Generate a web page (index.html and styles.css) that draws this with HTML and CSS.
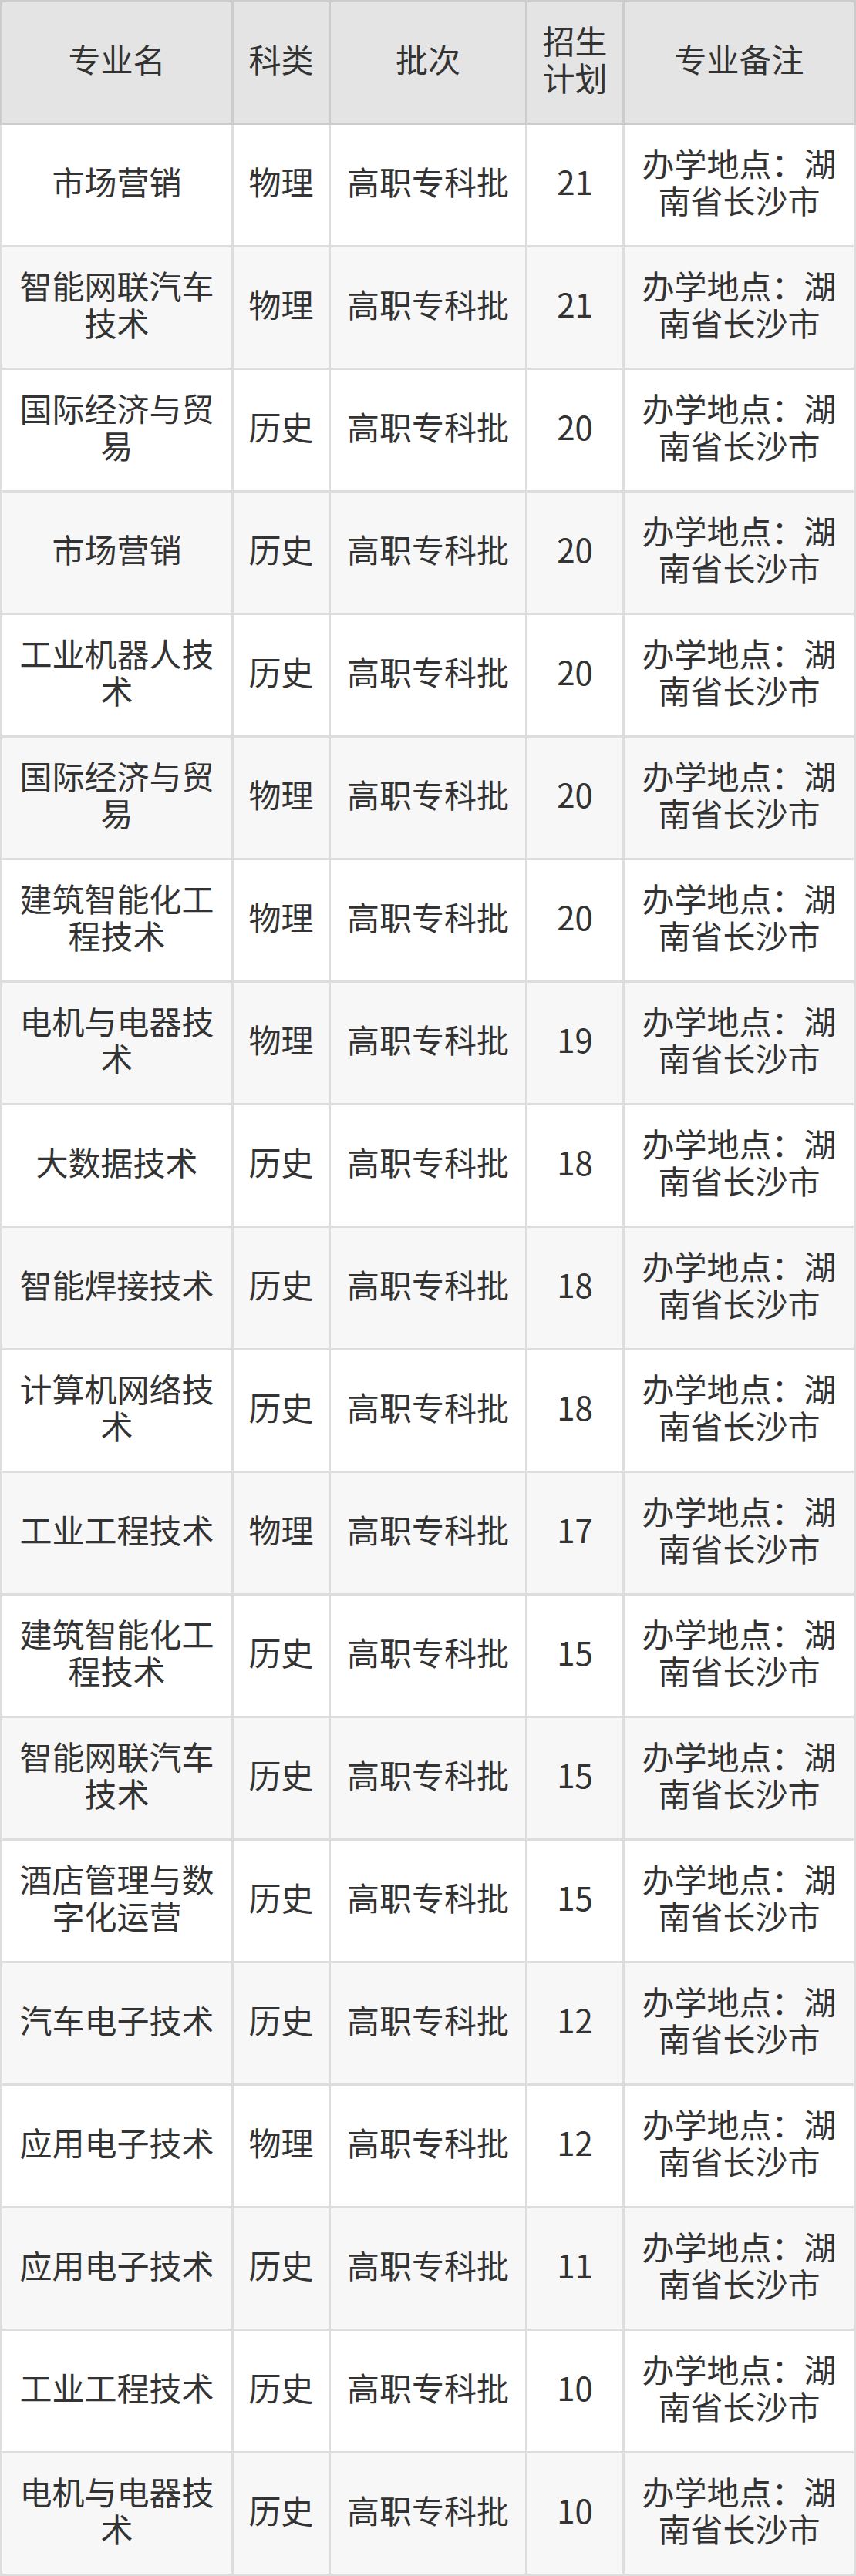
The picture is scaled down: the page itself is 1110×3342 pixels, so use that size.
FILE: index.html
```html
<!DOCTYPE html>
<html lang="zh-CN">
<head>
<meta charset="utf-8">
<title>专业招生计划</title>
<link rel="stylesheet" href="styles.css">
</head>
<body>
<table class="plan">
<thead>
<tr><th class="c1">专业名</th><th class="c2">科类</th><th class="c3">批次</th><th class="c4">招生计划</th><th class="c5">专业备注</th></tr>
</thead>
<tbody>
<tr><td>市场营销</td><td>物理</td><td>高职专科批</td><td>21</td><td>办学地点：湖南省长沙市</td></tr>
<tr><td>智能网联汽车技术</td><td>物理</td><td>高职专科批</td><td>21</td><td>办学地点：湖南省长沙市</td></tr>
<tr><td>国际经济与贸易</td><td>历史</td><td>高职专科批</td><td>20</td><td>办学地点：湖南省长沙市</td></tr>
<tr><td>市场营销</td><td>历史</td><td>高职专科批</td><td>20</td><td>办学地点：湖南省长沙市</td></tr>
<tr><td>工业机器人技术</td><td>历史</td><td>高职专科批</td><td>20</td><td>办学地点：湖南省长沙市</td></tr>
<tr><td>国际经济与贸易</td><td>物理</td><td>高职专科批</td><td>20</td><td>办学地点：湖南省长沙市</td></tr>
<tr><td>建筑智能化工程技术</td><td>物理</td><td>高职专科批</td><td>20</td><td>办学地点：湖南省长沙市</td></tr>
<tr><td>电机与电器技术</td><td>物理</td><td>高职专科批</td><td>19</td><td>办学地点：湖南省长沙市</td></tr>
<tr><td>大数据技术</td><td>历史</td><td>高职专科批</td><td>18</td><td>办学地点：湖南省长沙市</td></tr>
<tr><td>智能焊接技术</td><td>历史</td><td>高职专科批</td><td>18</td><td>办学地点：湖南省长沙市</td></tr>
<tr><td>计算机网络技术</td><td>历史</td><td>高职专科批</td><td>18</td><td>办学地点：湖南省长沙市</td></tr>
<tr><td>工业工程技术</td><td>物理</td><td>高职专科批</td><td>17</td><td>办学地点：湖南省长沙市</td></tr>
<tr><td>建筑智能化工程技术</td><td>历史</td><td>高职专科批</td><td>15</td><td>办学地点：湖南省长沙市</td></tr>
<tr><td>智能网联汽车技术</td><td>历史</td><td>高职专科批</td><td>15</td><td>办学地点：湖南省长沙市</td></tr>
<tr><td>酒店管理与数字化运营</td><td>历史</td><td>高职专科批</td><td>15</td><td>办学地点：湖南省长沙市</td></tr>
<tr><td>汽车电子技术</td><td>历史</td><td>高职专科批</td><td>12</td><td>办学地点：湖南省长沙市</td></tr>
<tr><td>应用电子技术</td><td>物理</td><td>高职专科批</td><td>12</td><td>办学地点：湖南省长沙市</td></tr>
<tr><td>应用电子技术</td><td>历史</td><td>高职专科批</td><td>11</td><td>办学地点：湖南省长沙市</td></tr>
<tr><td>工业工程技术</td><td>历史</td><td>高职专科批</td><td>10</td><td>办学地点：湖南省长沙市</td></tr>
<tr><td>电机与电器技术</td><td>历史</td><td>高职专科批</td><td>10</td><td>办学地点：湖南省长沙市</td></tr>
</tbody>
</table>
</body>
</html>
```
FILE: styles.css
```css
html, body {
  margin: 0;
  padding: 0;
  background: #ffffff;
}

.plan {
  width: 1110px;
  table-layout: fixed;
  border-collapse: separate;
  border-spacing: 0;
  font-family: "Noto Sans CJK SC", "Noto Sans", sans-serif;
  font-size: 42px;
  line-height: 48px;
  color: #333333;
}

.plan th,
.plan td {
  box-sizing: border-box;
  padding: 25px 15px 35px;
  text-align: center;
  vertical-align: middle;
  font-weight: normal;
  border-right: 3px solid #dddddd;
  border-bottom: 3px solid #dddddd;
  word-break: break-all;
}

.plan th {
  background: #e4e4e4;
  border-top: 3px solid #cccccc;
  border-right-color: #cccccc;
  border-bottom-color: #cccccc;
  height: 162px;
}

.plan td {
  height: 159px;
}

.plan th:first-child {
  border-left: 3px solid #cccccc;
}

.plan td:first-child {
  border-left: 3px solid #dddddd;
}

.plan .c1 { width: 303px; }
.plan .c2 { width: 126px; }
.plan .c3 { width: 255px; }
.plan .c4 { width: 126px; }
.plan .c5 { width: 300px; }

.plan tbody tr:nth-child(even) td {
  background: #f7f7f7;
}
```
